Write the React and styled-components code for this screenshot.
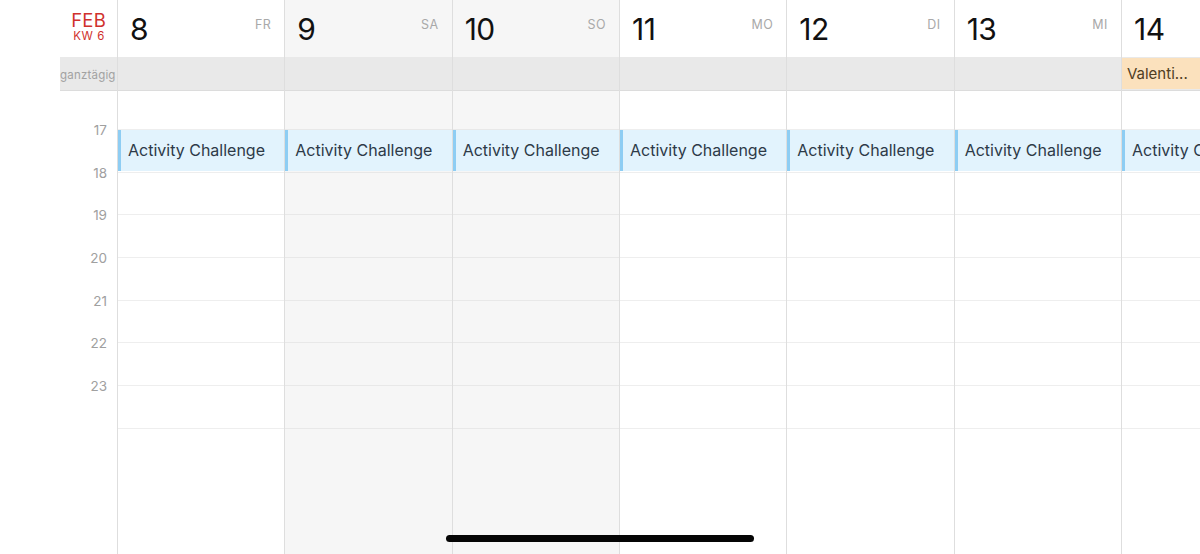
import styled, { createGlobalStyle } from "styled-components";

const GlobalStyle = createGlobalStyle`
  html, body {
    margin: 0;
    padding: 0;
    background: #fff;
    overflow: hidden;
  }
  body {
    font-family: Inter, "Noto Sans", "Liberation Sans", sans-serif;
    -webkit-font-smoothing: antialiased;
  }
`;

const HOUR = 42.7;
const COL = 167.33;

const Screen = styled.div`
  width: 1200px;
  height: 554px;
  display: flex;
  position: relative;
  overflow: hidden;
  background: #fff;
`;

const Gutter = styled.div`
  width: 117px;
  flex-shrink: 0;
  display: flex;
  flex-direction: column;
`;

const MonthCell = styled.div`
  height: 57px;
  display: flex;
  flex-direction: column;
  align-items: flex-end;
  padding-right: 11px;
  box-sizing: border-box;
  padding-top: 10px;
  color: #d0312d;
`;

const Month = styled.div`
  font-size: 18.5px;
  line-height: 20px;
  letter-spacing: 0.2px;
`;

const Week = styled.div`
  font-size: 11.5px;
  line-height: 13px;
  letter-spacing: 0.6px;
  margin-right: 1px;
`;

const AllDayLabel = styled.div`
  height: 34px;
  margin-left: 60px;
  background: #e9e9e9;
  border-bottom: 1px solid #dcdcdc;
  box-sizing: border-box;
  display: flex;
  align-items: center;
  padding-top: 2px;
  font-size: 11.5px;
  color: #a2a2a2;
  letter-spacing: 0.2px;
  white-space: nowrap;
`;

const TimeLabels = styled.div`
  padding-top: 31px;
  display: flex;
  flex-direction: column;
`;

const TimeLabel = styled.div`
  height: ${HOUR}px;
  text-align: right;
  padding-right: 10px;
  font-size: 13.5px;
  line-height: 16px;
  color: #a0a0a0;
`;

const Days = styled.div`
  display: flex;
  flex: 1;
  overflow: hidden;
`;

const DayColumn = styled.div`
  width: ${COL}px;
  flex-shrink: 0;
  border-left: 1px solid #dedede;
  box-sizing: border-box;
  display: flex;
  flex-direction: column;
  background: ${(p) => (p.$weekend ? "#f6f6f6" : "#fff")};
`;

const DayHeader = styled.div`
  height: 57px;
  display: flex;
  justify-content: space-between;
  padding: 0 13px 0 12px;
  box-sizing: border-box;
`;

const DayNum = styled.div`
  font-size: 30px;
  line-height: 30px;
  padding-top: 14px;
  color: #111;
  letter-spacing: -0.5px;
`;

const DayName = styled.div`
  font-size: 12.5px;
  padding-top: 17px;
  color: #a9a9a9;
  letter-spacing: 0.5px;
`;

const AllDayCell = styled.div`
  height: 34px;
  background: #e9e9e9;
  border-bottom: 1px solid #dcdcdc;
  box-sizing: border-box;
  padding: 1px 0 1px 0;
  display: flex;
`;

const AllDayEvent = styled.div`
  flex: 1;
  background: #fbe1bd;
  color: #4f3d22;
  font-size: 15px;
  display: flex;
  align-items: center;
  padding-left: 5px;
  white-space: nowrap;
  overflow: hidden;
`;

const Body = styled.div`
  padding-top: 38px;
  display: flex;
  flex-direction: column;
`;

const HourSlot = styled.div`
  height: ${HOUR}px;
  border-top: 1px solid ${(p) => (p.$weekend ? "#e8e8e8" : "#eeeeee")};
  box-sizing: border-box;
  display: flex;
`;

const Event = styled.div`
  flex: 1;
  margin-bottom: 1px;
  background: #e2f3fd;
  border-left: 3px solid #8ecdf3;
  color: #2d3a48;
  font-size: 16px;
  display: flex;
  align-items: center;
  padding-left: 7px;
  white-space: nowrap;
  overflow: hidden;
`;

const HomeIndicator = styled.div`
  position: absolute;
  left: 446px;
  top: 535px;
  width: 308px;
  height: 7px;
  border-radius: 4px;
  background: #050505;
`;

const days = [
  { num: 8, name: "FR" },
  { num: 9, name: "SA", weekend: true },
  { num: 10, name: "SO", weekend: true },
  { num: 11, name: "MO" },
  { num: 12, name: "DI" },
  { num: 13, name: "MI" },
  { num: 14, name: "DO", allDay: "Valenti..." },
];

const hours = [17, 18, 19, 20, 21, 22, 23];

const App = () => {
  return (
    <Screen>
      <GlobalStyle />
      <Gutter>
        <MonthCell>
          <Month>FEB</Month>
          <Week>KW 6</Week>
        </MonthCell>
        <AllDayLabel>ganztägig</AllDayLabel>
        <TimeLabels>
          {hours.map((h) => (
            <TimeLabel key={h}>{h}</TimeLabel>
          ))}
        </TimeLabels>
      </Gutter>
      <Days>
        {days.map((d) => (
          <DayColumn key={d.num} $weekend={d.weekend}>
            <DayHeader>
              <DayNum>{d.num}</DayNum>
              {d.num !== 14 && <DayName>{d.name}</DayName>}
            </DayHeader>
            <AllDayCell>
              {d.allDay && <AllDayEvent>{d.allDay}</AllDayEvent>}
            </AllDayCell>
            <Body>
              {hours.map((h) => (
                <HourSlot key={h} $weekend={d.weekend}>
                  {h === 17 && <Event>Activity Challenge</Event>}
                </HourSlot>
              ))}
              <HourSlot $weekend={d.weekend} />
            </Body>
          </DayColumn>
        ))}
      </Days>
      <HomeIndicator />
    </Screen>
  );
};

export default App;
